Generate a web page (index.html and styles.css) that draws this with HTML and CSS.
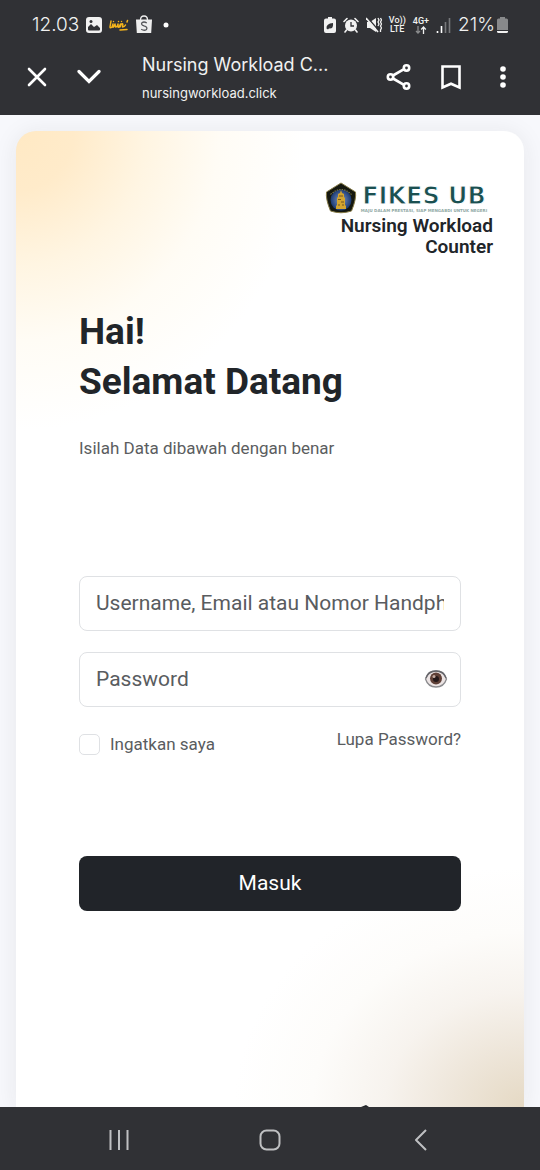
FILE: index.html
```html
<!DOCTYPE html>
<html lang="id">
<head>
<meta charset="utf-8">
<meta name="viewport" content="width=device-width, initial-scale=1">
<title>Nursing Workload Counter</title>
<link rel="stylesheet" href="styles.css">
</head>
<body>
<header class="chrome">
  <div class="status">
    <div class="status-side">
      <span class="clock">12.03</span>
      <svg width="16" height="16" viewBox="0 0 16 16"><rect width="16" height="16" rx="3" fill="#f1f1f1"/><path d="M2 12.500V10l3-3 3 3 3-2 3 3v1.500q0 1-1 1H3q-1 0-1-1Z" fill="#303135"/><circle cx="5" cy="4.500" r="1.500" fill="#303135"/></svg>
      <svg width="20" height="16" viewBox="0 0 20 16" fill="none" stroke="#f6b51c" stroke-width="1.500" stroke-linecap="round" stroke-linejoin="round"><path d="M2 4 1 10q0 1.500 2 0l1-3-.5 3q1 1 2.500-3l.5 3q2 0 2.500-3v3q1 1 2.500-3l-.5 3 1.500-3q2-1 1 3 2 0 3-2M18 5l.5-1.500M11 13l7-.5M4.500 4.500v.1M9.500 4.500v.1M12.500 4.500v.1"/></svg>
      <svg class="bag" width="16" height="18" viewBox="0 0 16 18"><path d="M4.500 5Q4.500 1 8 1t3.500 4" fill="none" stroke="#eee" stroke-width="1.300"/><path d="M0 4.500h16L15.200 18H.8Z" fill="#eee"/><path d="M10.800 8Q8 6.200 6 7.700q-1.500 2 2 3.200 4 1.200 2.500 3.600-2.300 1.600-5.300-.3" fill="none" stroke="#55565a" stroke-width="1.300"/></svg>
      <svg class="dot" width="6" height="6" viewBox="0 0 6 6"><circle cx="3" cy="3" r="2.500" fill="#fff"/></svg>
    </div>
    <div class="status-side status-right">
      <svg width="12" height="17" viewBox="0 0 12 17"><path d="M4 0h4v1.500h2q2 0 2 2V14q0 2-2 2H2q-2 0-2-2V3.500q0-2 2-2h2Z" fill="#f1f1f1"/><path d="M2.500 11.500q-.5-5 6.500-5.500.8 6-4 5.500l3-3.500-4 4.500Z" fill="#303135"/></svg>
      <svg width="16" height="16" viewBox="0 0 16 16"><circle cx="8" cy="8.500" r="6" fill="#f1f1f1"/><path d="m1 4.500 3-3M15 4.500l-3-3M3.500 13 2 15M12.500 13l1.500 2" stroke="#f1f1f1" stroke-width="1.600" stroke-linecap="round"/><path d="M8 5v4h3" fill="none" stroke="#303135" stroke-width="1.300"/></svg>
      <svg width="16" height="16" viewBox="0 0 16 16"><path d="M1 5h3l6-4v14l-6-4H1Z" fill="#f1f1f1"/><path d="m1 0 12 14" stroke="#303135" stroke-width="1.500"/><path d="m0 1 12 14" stroke="#f1f1f1" stroke-width="1.600"/><path d="m12 1 1 2-1 2 1 2-1 2M14.500 1l1 2-1 2 1 2-1 2 1 2-1 2v2" fill="none" stroke="#f1f1f1" stroke-width="1.300"/></svg>
      <span class="volte"><span>Vo))</span><span>LTE</span></span>
      <span class="net"><span>4G+</span><svg width="12" height="8" viewBox="0 0 12 8" fill="none" stroke-width="1.300"><path d="M3 0v7M1 5l2 2 2-2" stroke="#8b8c8e"/><path d="M8.500 8V1M6.200 3.500 8.500 1l2.300 2.500" stroke="#f1f1f1"/></svg></span>
      <svg width="15" height="15" viewBox="0 0 15 15"><path d="M1.500 15v-2" stroke="#fff" stroke-width="1.600"/><path d="M5.500 15V8" stroke="#fff" stroke-width="1.600"/><path d="M9.500 15V4M13.500 15V0" stroke="#77787b" stroke-width="1.600"/></svg>
      <span class="percent">21%</span>
      <svg width="11" height="16" viewBox="0 0 11 16"><path d="M3 0h5v1.500h1.500q1.500 0 1.500 1.500v10H0V3q0-1.500 1.500-1.500H3Z" fill="#88898b"/><path d="M0 14h11v.5Q11 16 9.500 16h-8Q0 16 0 14.500Z" fill="#f1f1f1"/></svg>
    </div>
  </div>
  <div class="toolbar">
    <button class="tool" aria-label="Tutup"><svg width="24" height="24" viewBox="0 0 24 24"><path d="m4 4 16 16M20 4 4 20"/></svg></button>
    <button class="tool" aria-label="Perkecil"><svg width="24" height="24" viewBox="0 0 24 24"><path class="thick" d="m2 6.500 10 10 10-10"/></svg></button>
    <div class="site"><span class="site-title">Nursing Workload C...</span><span class="site-url">nursingworkload.click</span></div>
    <button class="tool" aria-label="Bagikan"><svg width="26" height="28" viewBox="0 0 26 28"><path d="m7 12.500 11-6.300M7 15.500l11 6.300"/><circle cx="4.500" cy="14" r="2.700"/><circle cx="20.500" cy="5" r="2.700"/><circle cx="20.500" cy="23" r="2.700"/></svg></button>
    <button class="tool" aria-label="Markah"><svg width="26" height="28" viewBox="0 0 26 28"><path class="square" d="M4.500 3.500h17v21L13 20.700l-8.500 3.800Z"/></svg></button>
    <button class="tool" aria-label="Menu"><svg width="26" height="28" viewBox="0 0 26 28"><g class="solid"><circle cx="13" cy="6" r="2.800"/><circle cx="13" cy="14" r="2.800"/><circle cx="13" cy="22" r="2.800"/></g></svg></button>
  </div>
</header>

<main class="page">
  <section class="card">
    <div class="brand">
      <div class="logo">
        <svg width="32" height="32" viewBox="0 0 32 32"><defs><radialGradient id="sky"><stop offset="0" stop-color="#819ac3"/><stop offset="1" stop-color="#193873"/></radialGradient></defs><path d="M16 1 30.500 10q1 7-4 19Q16 32.500 5.500 29 .5 17 1.500 10Z" fill="#15180f" stroke="#867b48" stroke-width="1" stroke-linejoin="round"/><circle cx="16" cy="18" r="10.500" fill="url(#sky)"/><path d="M5.500 12.500Q16 2.500 26.500 12.500" fill="none" stroke="#777548" stroke-width="1.200" stroke-dasharray="1.500 1"/><path d="m16 8 1 3 2 1v3l1 1v7l1 1v3H11v-3l1-1v-7l1-1v-3l2-1Z" fill="#d3a52f"/><path d="M14 14h4M13 17.500h3M16 20h3M13 23h2M17 23h2" stroke="#735522" stroke-width="1.200"/></svg>
        <div class="logo-words"><span class="logo-name">FIKES UB</span><span class="logo-motto">MAJU DALAM PRESTASI, SIAP MENGABDI UNTUK NEGERI</span></div>
      </div>
      <p class="brand-name">Nursing Workload<br>Counter</p>
    </div>
    <div class="content">
      <h1 class="title">Hai!<br>Selamat Datang</h1>
      <p class="hint">Isilah Data dibawah dengan benar</p>
      <form class="login">
        <input class="field" type="text" aria-label="Username, Email atau Nomor Handphone" placeholder="Username, Email atau Nomor Handphone">
        <div class="secret">
          <input class="field" type="password" aria-label="Password" placeholder="Password">
          <button class="reveal" type="button" aria-label="Tampilkan password"><svg width="24" height="20" viewBox="0 0 24 20"><defs><clipPath id="lid"><path d="M1 10Q5 2 12 2t11 8q-4 8-11 8T1 10Z"/></clipPath></defs><path d="M1.500 10Q4 2 12 2t10.500 8q-2.500 8-10.500 8T1.500 10Z" fill="#ece4e4" stroke="#8b8b8e" stroke-width="1.300"/><g clip-path="url(#lid)"><circle cx="12" cy="9.500" r="6" fill="#5f4037"/><circle cx="12" cy="10" r="3" fill="#241819"/><circle cx="10" cy="7.500" r="1.500" fill="#c5aaa0"/></g><path d="M2 9Q4 2 12 2t10 7" fill="none" stroke="#65656a" stroke-width="1.300"/></svg></button>
        </div>
        <div class="options">
          <label class="remember"><input class="tick" type="checkbox">Ingatkan saya</label>
          <a class="forgot" href="#">Lupa Password?</a>
        </div>
        <button class="submit" type="submit">Masuk</button>
      </form>
    </div>
    <svg class="peak" width="8" height="8" viewBox="0 0 8 8"><path d="m0 2 5-2 3 2v6H0Z" fill="#222529"/></svg>
  </section>
</main>

<nav class="system">
  <button class="key" aria-label="Aplikasi terbaru"><svg width="24" height="24" viewBox="0 0 24 24"><path d="M3.500 2v20M12 2v20M20.500 2v20"/></svg></button>
  <button class="key" aria-label="Beranda"><svg width="24" height="24" viewBox="0 0 24 24"><rect x="2.500" y="2.500" width="19" height="19" rx="6"/></svg></button>
  <button class="key" aria-label="Kembali"><svg width="24" height="24" viewBox="0 0 24 24"><path d="M17 2 7 12l10 10"/></svg></button>
</nav>
</body>
</html>
```

FILE: styles.css
```css
* { box-sizing: border-box; }
body { margin: 0; height: 100vh; display: flex; flex-direction: column; font-family: Roboto, sans-serif; color: #212529; background: #f7f8fc; overflow: hidden; }
button { border: 0; padding: 0; background: none; font: inherit; cursor: pointer; }
svg { display: block; flex: none; }
p, h1 { margin: 0; }

.chrome { background: #303135; color: #f1f1f1; flex: none; }
.status { display: flex; justify-content: space-between; align-items: center; height: 50px; padding: 0 32px; }
.status-side { display: flex; align-items: center; gap: 7px; }
.clock, .percent { font-family: Inter, sans-serif; font-size: 19px; font-weight: 300; line-height: 24px; }
.bag { margin-bottom: 2px; }
.dot { margin-left: 4px; }
.percent { margin-right: -5px; }
.volte, .net { display: flex; flex-direction: column; align-items: center; font-family: Roboto, sans-serif; font-size: 9px; line-height: 9px; font-weight: 500; }

.toolbar { display: flex; align-items: center; height: 65px; padding: 0 11px 12px; }
.tool { width: 52px; display: grid; place-items: center; height: 48px; flex: none; }
.tool svg { fill: none; stroke: #fff; stroke-width: 2.600; stroke-linecap: round; }
.tool .thick { stroke-width: 3.200; }
.tool .square { stroke-linecap: butt; }
.tool .solid { fill: #fff; stroke: none; }
.site { flex: 1; min-width: 0; display: flex; flex-direction: column; gap: 6px; padding: 3px 0 0 27px; white-space: nowrap; }
.site-title { font-family: Inter, sans-serif; font-size: 18px; line-height: 24px; }
.site-url { font-family: Inter, sans-serif; font-size: 13px; line-height: 20px; }

.page { flex: 1; min-height: 0; padding: 16px 16px 0; overflow: hidden; }
.card {
  min-height: 100%; position: relative; padding: 51px 31px 0; border-radius: 20px 20px 0 0; box-shadow: 0 2px 24px #21252914;
  background:
    radial-gradient(ellipse 290px 300px at 0 0, #ffe9c4 0%, #ffebca 20%, #fff5e2 45%, #fffcf5 70%, #fffffe00 100%),
    radial-gradient(ellipse 290px 240px at 100% 100%, #e5d9c4 0%, #eee6da 25%, #f7f3ee 48%, #fdfcfa 73%, #ffffff00 100%),
    #fff;
}
.brand { display: flex; flex-direction: column; align-items: flex-end; }
.logo { display: flex; gap: 3px; padding-right: 5px; }
.logo-words { display: flex; flex-direction: column; align-items: center; width: 128px; white-space: nowrap; }
.logo-name { font-family: "DejaVu Sans", sans-serif; font-size: 24px; font-weight: 700; line-height: 28px; color: #1b5051; -webkit-text-stroke: 1px #fff; }
.logo-motto { font-family: "DejaVu Sans", sans-serif; font-size: 4px; font-weight: 700; line-height: 2px; color: #8fa8a4; }
.brand-name { margin-top: 1px; text-align: right; font-size: 19px; line-height: 21px; font-weight: 600; }

.content { padding: 0 32px; }
.title { margin-top: 50px; font-size: 37px; line-height: 50px; font-weight: 700; }
.hint { margin-top: 29px; font-size: 17px; line-height: 24px; color: #5b5d60; }
.login { margin-top: 116px; }
.field { display: block; width: 100%; height: 55px; padding: 0 16px 2px; border: 1px solid #dfe1e4; border-radius: 8px; background: #fff; font: 21px/30px Roboto, sans-serif; color: #55585c; }
.field::placeholder { color: #595c60; opacity: 1; }
.secret { position: relative; margin-top: 21px; }
.secret .field { padding-right: 48px; }
.reveal { position: absolute; right: 13px; top: 17px; }
.options { display: flex; justify-content: space-between; align-items: flex-start; margin-top: 19px; font-size: 17px; line-height: 26px; color: #595c60; }
.remember { display: flex; align-items: center; gap: 10px; padding-top: 5px; }
.tick { appearance: none; width: 21px; height: 21px; margin: 0; border: 1px solid #dfe1e4; border-radius: 5px; background: #fff; }
.forgot { color: inherit; text-decoration: none; }
.submit { display: block; width: 100%; height: 55px; margin-top: 99px; padding-bottom: 2px; border-radius: 8px; background: #212429; color: #fff; font-size: 21px; line-height: 30px; }
.peak { position: absolute; bottom: -6px; left: 68%; }

.system { flex: none; display: flex; justify-content: space-around; align-items: center; height: 63px; padding: 2px 44px 0; background: #303135; position: relative; }
.key { width: 48px; height: 48px; display: grid; place-items: center; }
.key svg { fill: none; stroke: #bfc0c2; stroke-width: 2; stroke-linejoin: round; }
```
